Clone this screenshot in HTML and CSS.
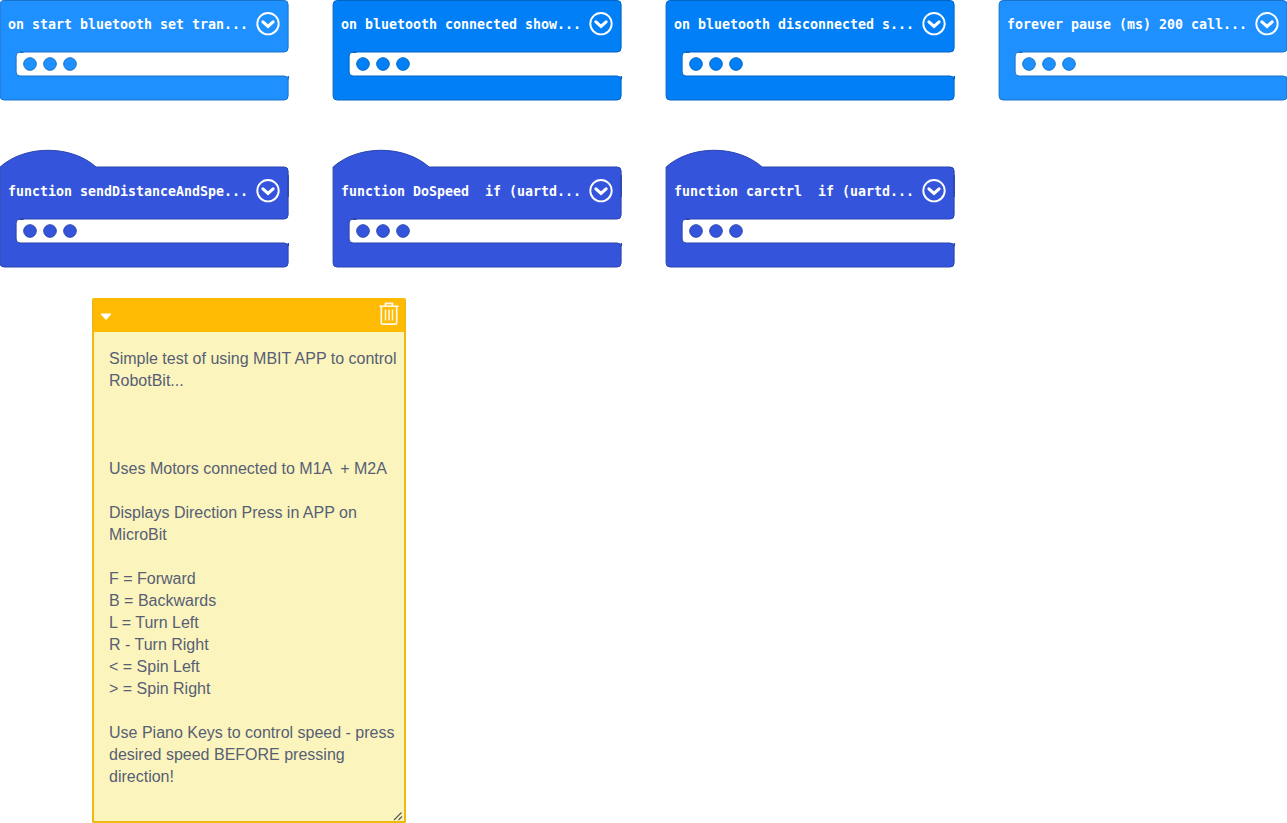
FILE: index.html
```
<!DOCTYPE html>
<html lang="en">
<head>
<meta charset="utf-8">
<title>Blocks workspace</title>
<link rel="stylesheet" href="styles.css">
</head>
<body>
<svg class="defs" width="0" height="0" aria-hidden="true">
  <defs>
    <g id="mouth">
      <circle cx="30.400" cy="64" r="6.300"/><circle cx="50.400" cy="64" r="6.300"/><circle cx="70.400" cy="64" r="6.300"/>
      <path class="notch" d="M20 52.300H24M288.700 76V79.500"/>
    </g>
    <g id="event">
      <path d="M.5 4.500a4 4 0 0 1 4-4H284.500a4 4 0 0 1 4 4V48a4 4 0 0 1-4 4H20.500a4 4 0 0 0-4 4V72a4 4 0 0 0 4 4H284.500a4 4 0 0 1 4 4V96a4 4 0 0 1-4 4H4.500a4 4 0 0 1-4-4z"/>
      <use href="#mouth"/>
    </g>
    <g id="function">
      <path d="M.5 0c25-22.300 71-22.300 96 0H284.500a4 4 0 0 1 4 4V48a4 4 0 0 1-4 4H20.500a4 4 0 0 0-4 4V72a4 4 0 0 0 4 4H284.500a4 4 0 0 1 4 4V96a4 4 0 0 1-4 4H4.500a4 4 0 0 1-4-4z"/>
      <path class="notch" d="M288.500 8V30"/>
      <use href="#mouth"/>
    </g>
    <symbol id="expand" viewBox="0 0 24 24">
      <circle cx="12" cy="11.700" r="10.700" fill="none" stroke="#fff" stroke-width="1.900"/>
      <path d="M6.900 9.900 12 14.500l5.100-4.600" fill="none" stroke="#fff" stroke-width="3.100" stroke-linecap="round"/>
    </symbol>
  </defs>
</svg>
<main class="workspace">
  <section class="row">
    <div class="block light"><svg class="shape" width="289" height="101" viewBox=".4 0 289 101"><use href="#event"/></svg><div class="label"><span>on start bluetooth set tran...</span><svg class="expand"><use href="#expand"/></svg></div></div>
    <div class="block blue"><svg class="shape" width="289" height="101" viewBox=".4 0 289 101"><use href="#event"/></svg><div class="label"><span>on bluetooth connected show...</span><svg class="expand"><use href="#expand"/></svg></div></div>
    <div class="block blue"><svg class="shape" width="289" height="101" viewBox=".4 0 289 101"><use href="#event"/></svg><div class="label"><span>on bluetooth disconnected s...</span><svg class="expand"><use href="#expand"/></svg></div></div>
    <div class="block light"><svg class="shape" width="289" height="101" viewBox=".4 0 289 101"><use href="#event"/></svg><div class="label"><span>forever pause (ms) 200 call...</span><svg class="expand"><use href="#expand"/></svg></div></div>
  </section>
  <section class="row functions">
    <div class="block indigo"><svg class="shape" width="289" height="101" viewBox=".4 0 289 101"><use href="#function"/></svg><div class="label"><span>function sendDistanceAndSpe...</span><svg class="expand"><use href="#expand"/></svg></div></div>
    <div class="block indigo"><svg class="shape" width="289" height="101" viewBox=".4 0 289 101"><use href="#function"/></svg><div class="label"><span>function DoSpeed  if (uartd...</span><svg class="expand"><use href="#expand"/></svg></div></div>
    <div class="block indigo"><svg class="shape" width="289" height="101" viewBox=".4 0 289 101"><use href="#function"/></svg><div class="label"><span>function carctrl  if (uartd...</span><svg class="expand"><use href="#expand"/></svg></div></div>
  </section>
  <article class="note">
    <header class="note-bar">
      <svg width="12" height="8" viewBox="0 0 12 8"><path d="M1 1h10L6 6.500z" fill="#fff" stroke="#fff" stroke-linejoin="round"/></svg>
      <svg width="20" height="24" viewBox="0 0 20 24" fill="none" stroke="#fff" stroke-opacity=".9"><path d="M.5 4.200H19.500" stroke-width="1.700"/><path d="M6.500 4V1.300h7V4M2.300 4.500V20.500q0 1.700 1.700 1.700H16q1.700 0 1.700-1.700V4.500" stroke-width="1.700"/><path d="M6.500 7.500V18.500M10 7.500V18.500M13.500 7.500V18.500" stroke-width="1.500"/></svg>
    </header>
    <div class="note-text">Simple test of using MBIT APP to control
RobotBit...



Uses Motors connected to M1A  + M2A

Displays Direction Press in APP on
MicroBit

F = Forward
B = Backwards
L = Turn Left
R - Turn Right
&lt; = Spin Left
&gt; = Spin Right

Use Piano Keys to control speed - press
desired speed BEFORE pressing
direction!</div>
    <svg class="grip" width="10" height="10" viewBox="0 0 10 10"><path d="M1 9 8.500 1.500M5.500 9 9 5.500" stroke="#555" stroke-width="1.100"/></svg>
  </article>
</main>
</body>
</html>
```
FILE: styles.css
```
body { margin: 0; background: #fff; overflow: hidden; }
.defs { display: block; }
.workspace { width: 1288px; height: 823px; display: flex; flex-direction: column; align-items: flex-start; }
.row { display: flex; gap: 44px; height: 101px; }
.functions { margin-top: 66px; }
.block { display: grid; width: 289px; height: 101px; }
.block > * { grid-area: 1 / 1; }
.shape { display: block; overflow: visible; stroke-width: 1; }
.notch { fill: none; stroke-width: 1.5; }
.light .shape { fill: #1e90ff; stroke: #1873cc; }
.blue .shape { fill: #007ff7; stroke: #0066c6; }
.indigo .shape { fill: #3455db; stroke: #2a44af; }
.label {
  display: flex; align-items: center; justify-content: space-between;
  height: 24px; margin-top: 12px; padding: 0 9px 0 8px;
  color: #fff; font: bold 13.29px/24px "DejaVu Sans Mono", "Liberation Mono", monospace; white-space: pre;
}
.label span { padding-top: 1px; }
.expand { width: 24px; height: 24px; }
.note {
  box-sizing: border-box; width: 314px; height: 525px; margin: 30px 0 0 91.5px;
  display: flex; flex-direction: column;
  background: #fbf5bd; border: solid #f0b90f; border-width: 0 2px 2px; border-radius: 2px; overflow: hidden;
}
.note-bar {
  display: flex; align-items: center; justify-content: space-between;
  box-sizing: border-box; height: 33.5px; margin: 0 -2px; padding: 0 6.5px 1.5px 8.5px; background: #ffba03;
}
.note-bar svg:first-child { margin-top: 5px; }
.note-text {
  flex: 1; padding: 16.5px 0 0 15.5px; color: #575e75; white-space: pre;
  font: 16px/22px "Liberation Sans", Arial, sans-serif;
}
.grip { align-self: flex-end; margin: 0 1px 0 0; }
```
